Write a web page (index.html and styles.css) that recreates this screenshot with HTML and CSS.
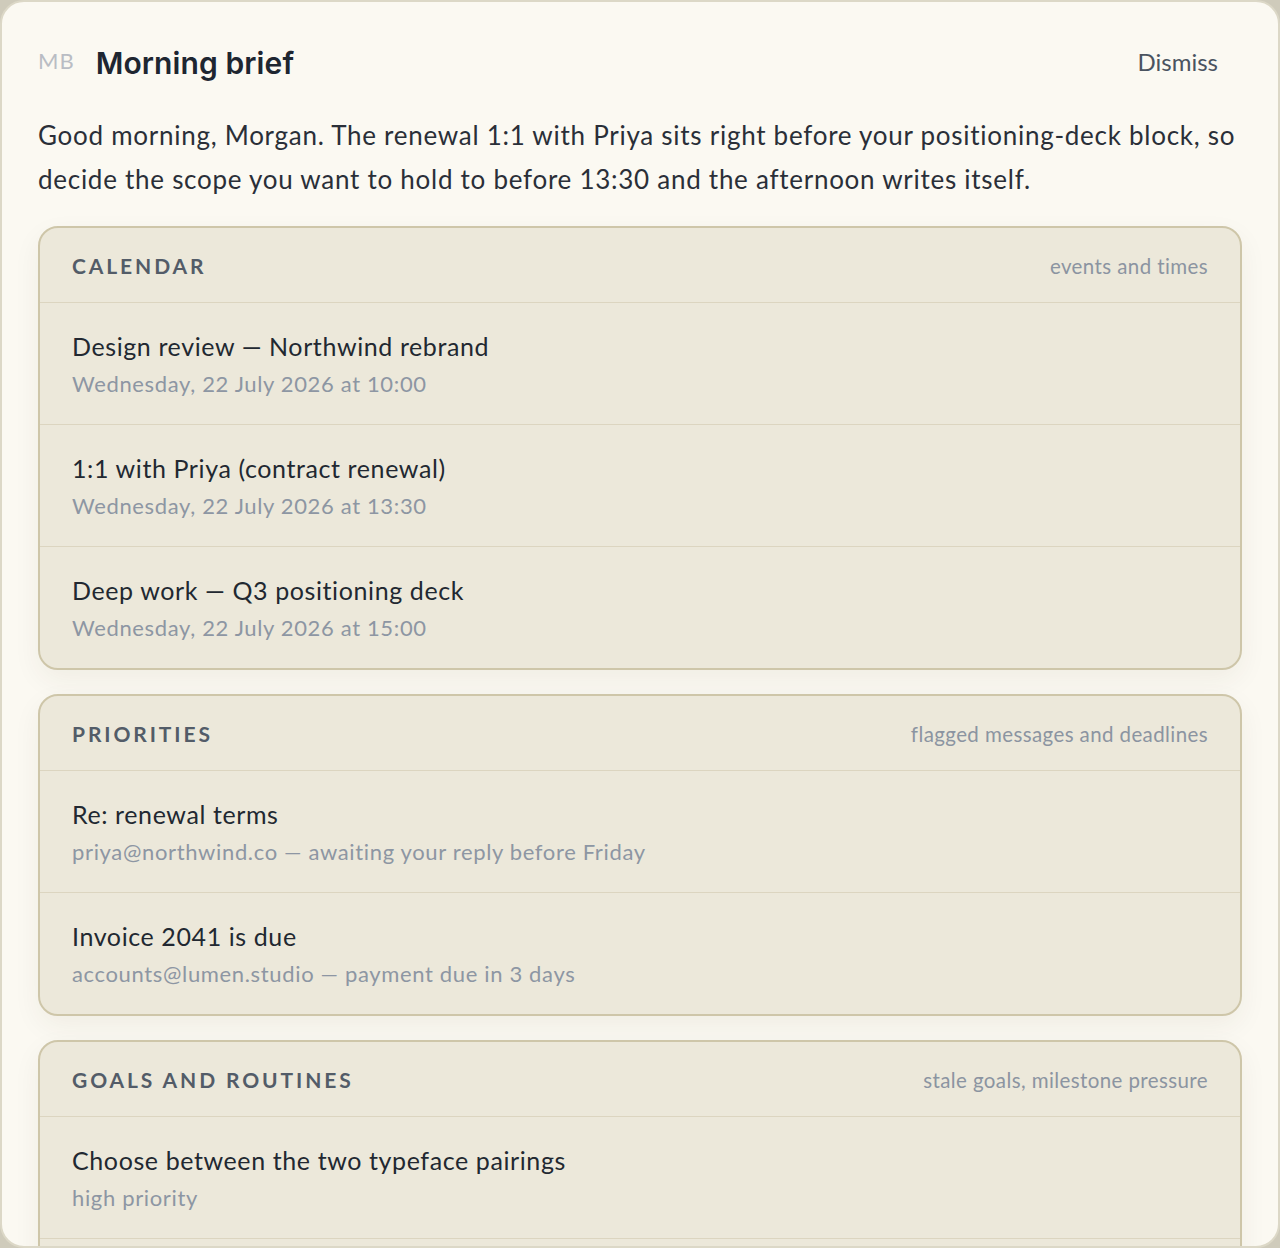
FILE: index.html
```html
<!DOCTYPE html>
<html lang="en">
<head>
<meta charset="utf-8">
<title>Morning brief</title>
<link rel="stylesheet" href="styles.css">
</head>
<body>
<div class="panel">
  <header class="top">
    <div class="brand">
      <span class="mono">MB</span>
      <h1 class="title">Morning brief</h1>
    </div>
    <button class="dismiss" type="button">Dismiss</button>
  </header>
  <p class="intro">Good morning, Morgan. The renewal 1:1 with Priya sits right before your positioning-deck block, so decide the scope you want to hold to before 13:30 and the afternoon writes itself.</p>

  <section class="card">
    <div class="card-head">
      <h2 class="card-label">Calendar</h2>
      <span class="card-hint">events and times</span>
    </div>
    <div class="row">
      <div class="row-title">Design review — Northwind rebrand</div>
      <div class="row-sub">Wednesday, 22 July 2026 at 10:00</div>
    </div>
    <div class="row">
      <div class="row-title">1:1 with Priya (contract renewal)</div>
      <div class="row-sub">Wednesday, 22 July 2026 at 13:30</div>
    </div>
    <div class="row">
      <div class="row-title">Deep work — Q3 positioning deck</div>
      <div class="row-sub">Wednesday, 22 July 2026 at 15:00</div>
    </div>
  </section>

  <section class="card">
    <div class="card-head">
      <h2 class="card-label">Priorities</h2>
      <span class="card-hint">flagged messages and deadlines</span>
    </div>
    <div class="row">
      <div class="row-title">Re: renewal terms</div>
      <div class="row-sub">priya@northwind.co — awaiting your reply before Friday</div>
    </div>
    <div class="row">
      <div class="row-title">Invoice 2041 is due</div>
      <div class="row-sub">accounts@lumen.studio — payment due in 3 days</div>
    </div>
  </section>

  <section class="card">
    <div class="card-head">
      <h2 class="card-label">Goals and routines</h2>
      <span class="card-hint">stale goals, milestone pressure</span>
    </div>
    <div class="row">
      <div class="row-title">Choose between the two typeface pairings</div>
      <div class="row-sub">high priority</div>
    </div>
    <div class="row">
      <div class="row-title">Weekly planning routine</div>
      <div class="row-sub">not done in 9 days</div>
    </div>
  </section>
</div>
</body>
</html>
```

FILE: styles.css
```css
html, body {
  margin: 0;
  padding: 0;
}
body {
  background: #cfcbbb;
  font-family: "Lato", "Noto Sans", sans-serif;
  color: #252b34;
}
.panel {
  box-sizing: border-box;
  height: 1248px;
  border: 2px solid #dcd8c7;
  border-radius: 24px;
  background: #fbf9f2;
  padding: 39px 36px 0;
  overflow: hidden;
}
.top {
  display: flex;
  align-items: center;
  justify-content: space-between;
}
.brand {
  display: flex;
  align-items: center;
  gap: 21px;
}
.mono {
  font-size: 22px;
  color: #b9bdc4;
  letter-spacing: 1px;
  line-height: 24px;
  margin-top: -4px;
}
.title {
  margin: 0;
  font-family: "Inter", sans-serif;
  font-weight: 600;
  font-size: 30px;
  line-height: 44px;
  letter-spacing: 0.1px;
  color: #1e2631;
}
.dismiss {
  border: 0;
  background: transparent;
  font-family: inherit;
  font-size: 24px;
  color: #4a5360;
  padding: 8px 24px;
  margin-top: -3px;
  cursor: pointer;
}
.intro {
  margin: 28px 0 25px;
  font-size: 26px;
  line-height: 44px;
  letter-spacing: 0.73px;
  color: #2a2f38;
}
.card {
  background: #ece8da;
  border: 2px solid #cec6a9;
  border-radius: 20px;
  margin-bottom: 24px;
  box-shadow: 0 10px 28px rgba(60, 50, 20, 0.06);
  overflow: hidden;
}
.card-head {
  display: flex;
  align-items: center;
  justify-content: space-between;
  padding: 24px 32px 22px;
  border-bottom: 1px solid #dcd5c0;
}
.card-label {
  margin: 0;
  font-size: 21px;
  font-weight: 700;
  letter-spacing: 2.9px;
  text-transform: uppercase;
  color: #535c68;
  line-height: 28px;
}
.card-hint {
  font-size: 20.5px;
  letter-spacing: 0.4px;
  color: #8b94a1;
  line-height: 28px;
}
.row {
  padding: 25px 32px 24px;
  border-bottom: 1px solid #dcd5c0;
}
.row:last-child {
  border-bottom: 0;
}
.row-title {
  font-size: 25px;
  line-height: 36px;
  letter-spacing: 0.6px;
  color: #222831;
}
.row-sub {
  margin-top: 4px;
  font-size: 22px;
  line-height: 32px;
  letter-spacing: 0.65px;
  color: #8d96a3;
}
```
